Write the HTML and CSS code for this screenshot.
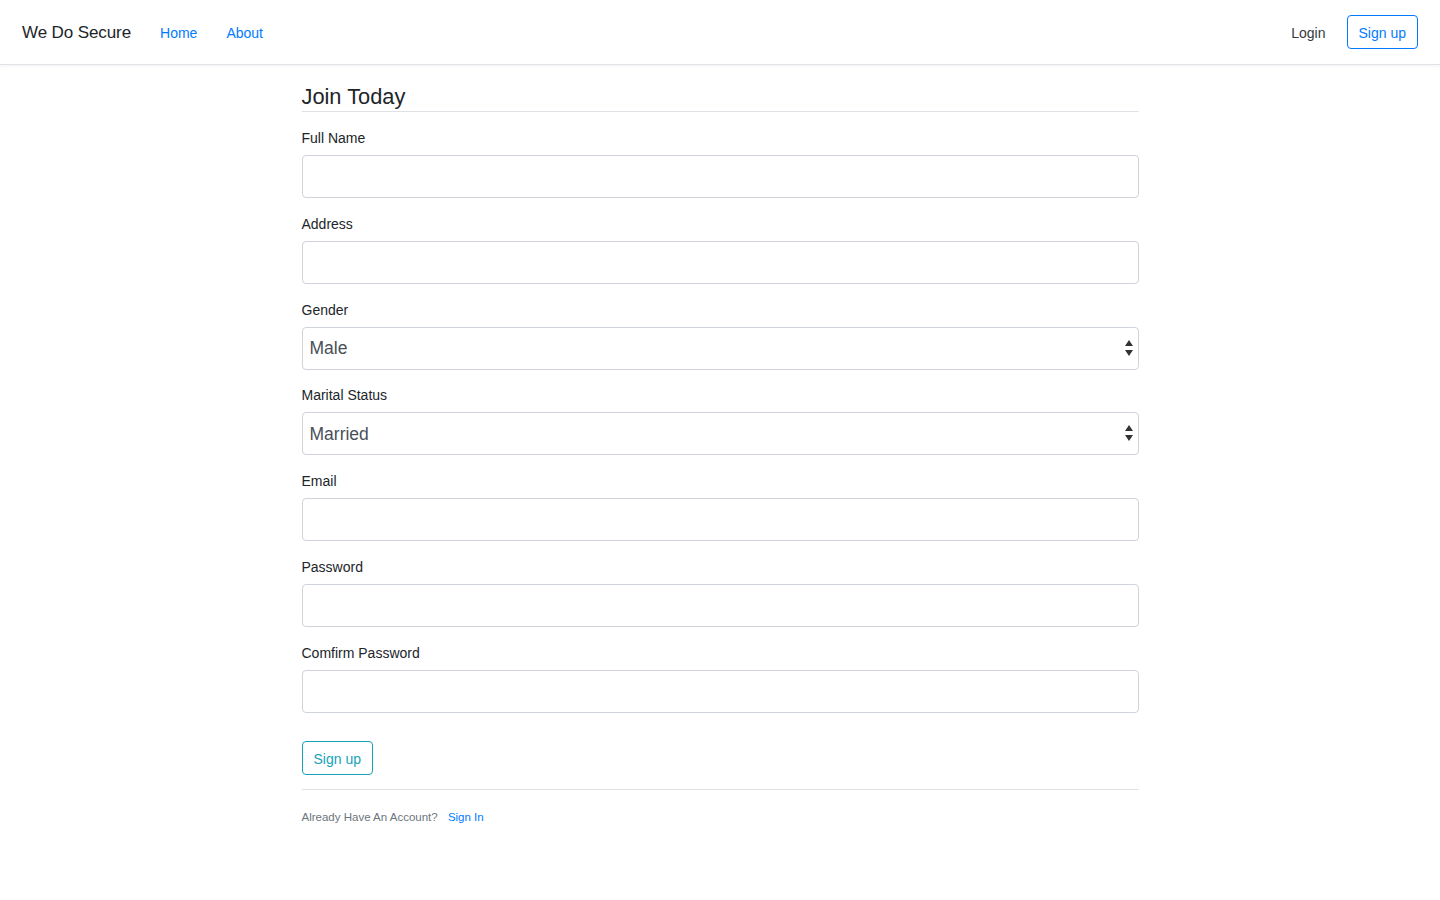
FILE: index.html
```html
<!DOCTYPE html>
<html lang="en">
<head>
<meta charset="utf-8">
<title>We Do Secure - Join Today</title>
<link rel="stylesheet" href="styles.css">
</head>
<body>
<header class="navbar">
  <div class="nav-left">
    <a class="brand" href="#">We Do Secure</a>
    <a class="nav-link" href="#">Home</a>
    <a class="nav-link" href="#">About</a>
  </div>
  <div class="nav-right">
    <a class="nav-login" href="#">Login</a>
    <a class="btn btn-primary-outline" href="#">Sign up</a>
  </div>
</header>
<main class="main">
  <form class="form">
    <h2 class="legend">Join Today</h2>
    <div class="group">
      <label class="label">Full Name</label>
      <input class="input" type="text">
    </div>
    <div class="group">
      <label class="label">Address</label>
      <input class="input" type="text">
    </div>
    <div class="group">
      <label class="label">Gender</label>
      <div class="select-wrap">
        <select class="select"><option>Male</option><option>Female</option></select>
        <svg class="arrows" width="10" height="18" viewBox="0 0 10 18"><path d="M5 1 L9 7 L1 7 Z" fill="#333"/><path d="M1 11 L9 11 L5 17 Z" fill="#333"/></svg>
      </div>
    </div>
    <div class="group">
      <label class="label">Marital Status</label>
      <div class="select-wrap">
        <select class="select"><option>Married</option><option>Single</option></select>
        <svg class="arrows" width="10" height="18" viewBox="0 0 10 18"><path d="M5 1 L9 7 L1 7 Z" fill="#333"/><path d="M1 11 L9 11 L5 17 Z" fill="#333"/></svg>
      </div>
    </div>
    <div class="group">
      <label class="label">Email</label>
      <input class="input" type="email">
    </div>
    <div class="group">
      <label class="label">Password</label>
      <input class="input" type="password">
    </div>
    <div class="group">
      <label class="label">Comfirm Password</label>
      <input class="input" type="password">
    </div>
    <div class="submit-row">
      <button class="btn btn-info-outline" type="button">Sign up</button>
    </div>
  </form>
  <div class="foot">
    <small class="muted">Already Have An Account? <a class="signin" href="#">Sign In</a></small>
  </div>
</main>
</body>
</html>
```
FILE: styles.css
```css
* { box-sizing: border-box; }
html, body { margin: 0; padding: 0; }
body {
  font-family: "Liberation Sans", Arial, sans-serif;
  color: #212529;
  background: #fff;
  font-size: 14px;
}
a { text-decoration: none; }

.navbar {
  height: 65px;
  display: flex;
  align-items: center;
  justify-content: space-between;
  padding: 0 22px;
  border-bottom: 1px solid #dee2e6;
  box-shadow: 0 1px 3px rgba(0,0,0,0.06);
}
.nav-left, .nav-right { display: flex; align-items: center; }
.brand {
  font-size: 17px;
  color: #212529;
  margin-right: 29px;
  letter-spacing: -0.1px;
  padding-top: 2px;
}
.nav-link {
  font-size: 14px;
  color: #007bff;
  margin-right: 29px;
  padding-top: 2px;
}
.nav-login {
  font-size: 14px;
  color: #343a40;
  margin-right: 21px;
  padding-top: 2px;
}
.btn {
  display: inline-block;
  font-family: inherit;
  font-size: 14px;
  line-height: 20px;
  padding: 7px 11px 5px;
  border-radius: 4px;
  background: #fff;
  cursor: pointer;
}
.btn-primary-outline { color: #007bff; border: 1px solid #007bff; margin-top: -1px; }
.btn-info-outline { color: #17a2b8; border: 1px solid #17a2b8; }

.main {
  width: 837px;
  margin: 0 auto;
}
.legend {
  font-size: 21.8px;
  font-weight: 400;
  line-height: 25px;
  margin: 19px 0 15px;
  padding-bottom: 2px;
  border-bottom: 1px solid #dee2e6;
  color: #212529;
}
.group { margin-bottom: 14.83px; }
.label {
  display: block;
  font-size: 14px;
  line-height: 21px;
  padding-top: 1px;
  margin-bottom: 6px;
}
.input, .select {
  display: block;
  width: 100%;
  height: 43px;
  border: 1px solid #ced4da;
  border-radius: 4px;
  background: #fff;
  font-family: inherit;
  outline: none;
}
.select-wrap { position: relative; }
.select {
  -webkit-appearance: none;
  appearance: none;
  font-size: 17.5px;
  color: #495057;
  padding: 0 7px;
}
.arrows {
  position: absolute;
  right: 5px;
  top: 12px;
  pointer-events: none;
}
.submit-row { padding-top: 13px; padding-bottom: 14px; border-bottom: 1px solid #dee2e6; }
.foot { padding-top: 18px; }
.muted { font-size: 11.5px; color: #6c757d; }
.signin { color: #007bff; margin-left: 7px; }
```
